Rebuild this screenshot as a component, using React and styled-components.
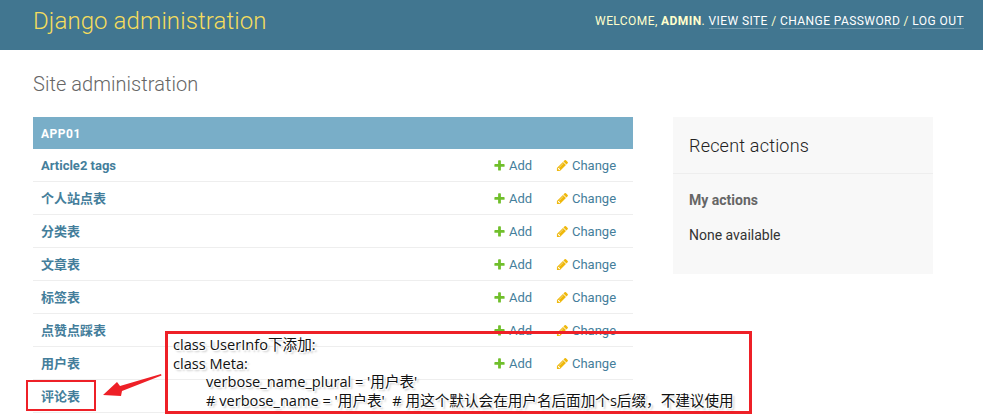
import styled, { createGlobalStyle } from "styled-components";

const GlobalStyle = createGlobalStyle`
  html, body {
    margin: 0;
    padding: 0;
    background: #fff;
    height: 420px;
    overflow: hidden;
  }
  body {
    font-family: Roboto, "Noto Sans CJK SC", sans-serif;
    font-size: 13px;
    color: #333;
  }
`;

const models = [
  { name: "Article2 tags" },
  { name: "个人站点表", cjk: true },
  { name: "分类表", cjk: true },
  { name: "文章表", cjk: true },
  { name: "标签表", cjk: true },
  { name: "点赞点踩表", cjk: true },
  { name: "用户表", cjk: true },
  { name: "评论表", cjk: true },
];

const PlusIcon = () => (
  <svg width="13" height="13" viewBox="0 0 1792 1792">
    <path fill="#70bf2b" d="M1600 796v192q0 40-28 68t-68 28h-416v416q0 40-28 68t-68 28h-192q-40 0-68-28t-28-68v-416h-416q-40 0-68-28t-28-68v-192q0-40 28-68t68-28h416v-416q0-40 28-68t68-28h192q40 0 68 28t28 68v416h416q40 0 68 28t28 68z" />
  </svg>
);

const PencilIcon = () => (
  <svg width="13" height="13" viewBox="0 0 1792 1792">
    <path fill="#efb80b" d="M491 1536l91-91-235-235-91 91v107h128v128h107zm523-928q0-22-22-22-10 0-17 7l-542 542q-7 7-7 17 0 22 22 22 10 0 17-7l542-542q7-7 7-17zm-54-192l416 416-832 832h-416v-416zm683 96q0 53-37 90l-166 166-416-416 166-165q36-38 90-38 53 0 91 38l235 234q37 39 37 91z" />
  </svg>
);

const App = () => {
  return (
    <Page>
      <GlobalStyle />
      <Header>
        <Branding>Django administration</Branding>
        <UserTools>
          Welcome, <strong>admin</strong>. <ToolLink>View site</ToolLink> / <ToolLink>Change password</ToolLink> / <ToolLink>Log out</ToolLink>
        </UserTools>
      </Header>

      <Content>
        <PageTitle>Site administration</PageTitle>
        <Columns>
          <Main>
            <Caption>APP01</Caption>
            {models.map((m) => (
              <Row key={m.name}>
                <ModelName $cjk={m.cjk}>{m.name}</ModelName>
                <RowAction $width="63px"><PlusIcon />Add</RowAction>
                <RowAction $width="77px"><PencilIcon />Change</RowAction>
              </Row>
            ))}
          </Main>

          <Sidebar>
            <SidebarTitle>Recent actions</SidebarTitle>
            <SidebarBody>
              <SidebarSubtitle>My actions</SidebarSubtitle>
              <SidebarText>None available</SidebarText>
            </SidebarBody>
          </Sidebar>
        </Columns>
      </Content>

      {/* screenshot annotation on top of the page */}
      <NoteBox>
        <NoteLine>class UserInfo下添加:</NoteLine>
        <NoteLine>class Meta:</NoteLine>
        <NoteLine $indent>verbose_name_plural = '用户表'</NoteLine>
        <NoteLine $indent $cover># verbose_name = '用户表'  # 用这个默认会在用户名后面加个s后缀，不建议使用</NoteLine>
      </NoteBox>
      <HighlightBox />
      <ArrowSvg width="64" height="30" viewBox="0 0 64 30">
        <path fill="#ee2027" d="M3 25 L17 12 L20 16 L61 4 L61.5 5.5 L22 21 L21 26 Z" />
      </ArrowSvg>
    </Page>
  );
};
export default App;

const Page = styled.div`
  position: relative;
  width: 983px;
  height: 420px;
  overflow: hidden;
`;

const Header = styled.div`
  height: 50px;
  box-sizing: border-box;
  background: #417690;
  padding: 0 19px 0 33px;
  display: flex;
  justify-content: space-between;
  align-items: center;
`;

const Branding = styled.div`
  font-size: 24px;
  font-weight: 300;
  letter-spacing: 0.1px;
  color: #f5dd5d;
  position: relative;
  top: -4px;
`;

const UserTools = styled.div`
  font-size: 12px;
  letter-spacing: 0.42px;
  text-transform: uppercase;
  color: #ffc;
  position: relative;
  top: -4px;

  strong {
    font-weight: 700;
  }
`;

const ToolLink = styled.span`
  color: #fff;
  border-bottom: 1px solid rgba(255, 255, 255, 0.25);
`;

const Content = styled.div`
  padding: 22px 50px 0 33px;
`;

const PageTitle = styled.h1`
  margin: 0 0 21px;
  font-size: 20px;
  font-weight: 300;
  letter-spacing: 0.05px;
  line-height: 24px;
  color: #666;
`;

const Columns = styled.div`
  display: flex;
  gap: 40px;
  align-items: flex-start;
`;

const Main = styled.div`
  width: 600px;
`;

const Caption = styled.div`
  height: 32px;
  box-sizing: border-box;
  padding: 9px 8px 0;
  background: #79aec8;
  color: #fff;
  font-size: 12px;
  font-weight: 700;
  letter-spacing: 0.5px;
  line-height: 16px;
`;

const Row = styled.div`
  height: 33px;
  box-sizing: border-box;
  padding-left: 8px;
  display: flex;
  align-items: center;
  border-bottom: 1px solid #eee;
`;

const ModelName = styled.div`
  flex: 1;
  font-weight: 700;
  color: #447e9b;
  padding-bottom: ${(p) => (p.$cjk ? "2px" : "0")};
`;

const RowAction = styled.div`
  width: ${(p) => p.$width};
  display: flex;
  align-items: center;
  gap: 3px;
  color: #447e9b;
`;

const Sidebar = styled.div`
  width: 260px;
  height: 157px;
  background: #f8f8f8;
`;

const SidebarTitle = styled.h2`
  margin: 0;
  height: 57px;
  box-sizing: border-box;
  padding: 17px 16px 0;
  font-size: 18px;
  font-weight: 300;
  letter-spacing: 0.2px;
  line-height: 24px;
  color: #222;
  border-bottom: 1px solid #eee;
`;

const SidebarBody = styled.div`
  padding: 18px 16px 0;
`;

const SidebarSubtitle = styled.h3`
  margin: 0 0 19px;
  font-size: 14px;
  font-weight: 700;
  line-height: 16px;
  color: #666;
`;

const SidebarText = styled.p`
  margin: 0;
  font-size: 14px;
  line-height: 16px;
  color: #333;
`;

const NoteBox = styled.div`
  position: absolute;
  left: 165px;
  top: 331px;
  width: 587px;
  height: 83px;
  box-sizing: border-box;
  border: 3px solid #ee2027;
  padding: 1px 0 0 5px;
  font-family: "Open Sans", "Noto Sans CJK SC", sans-serif;
  font-size: 14.6px;
  line-height: 18.6px;
  color: #111;
`;

const NoteLine = styled.div`
  width: fit-content;
  white-space: pre;
  margin-left: ${(p) => (p.$indent ? "33px" : "0")};
  background: ${(p) => (p.$cover ? "#fff" : "none")};
  text-shadow: 1px 1px 1px #fff, -1px -1px 1px #fff, 1px -1px 1px #fff, -1px 1px 1px #fff, 2px 2px 2px rgba(0, 0, 0, 0.25);
`;

const HighlightBox = styled.div`
  position: absolute;
  left: 26px;
  top: 380px;
  width: 70px;
  height: 31px;
  box-sizing: border-box;
  border: 2px solid #ee2027;
`;

const ArrowSvg = styled.svg`
  position: absolute;
  left: 100px;
  top: 370px;
`;
